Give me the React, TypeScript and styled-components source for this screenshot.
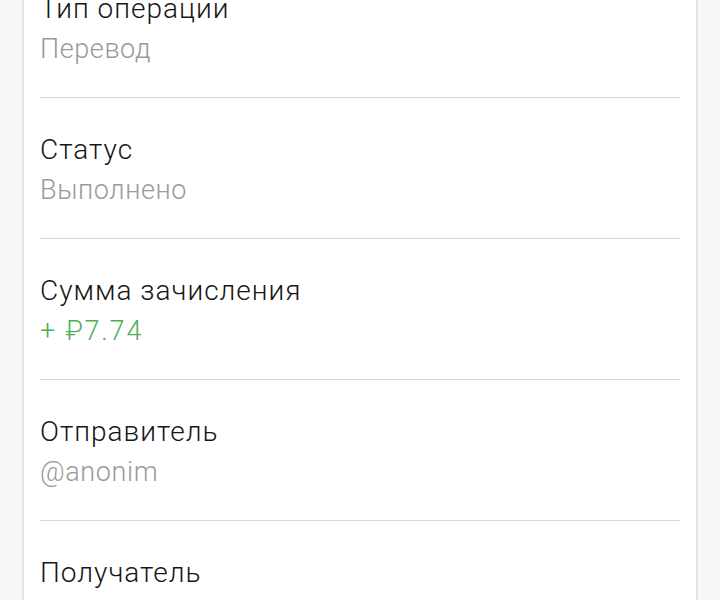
import React from "react";
import styled, { createGlobalStyle } from "styled-components";

const GlobalStyle = createGlobalStyle`
    html, body {
        margin: 0;
        padding: 0;
        background-color: #f7f7f7;
        font-family: Roboto, "Noto Sans", sans-serif;
    }
`;

const Page = styled.div`
    height: 600px;
    overflow: hidden;
`;

const DetailsCard = styled.div`
    margin: -43px 24px 0 24px;
    padding: 0 16px;
    background-color: #ffffff;
    box-shadow: -1px 0 2px rgba(0, 0, 0, 0.14), 1px 0 2px rgba(0, 0, 0, 0.14);
`;

const DetailRow = styled.div`
    padding: 32px 0 28px 0;
    border-bottom: 1px solid #d6d6d6;
`;

const DetailLabel = styled.div`
    font-size: 28px;
    font-weight: 300;
    line-height: 40px;
    letter-spacing: 1px;
    color: #161616;
`;

const DetailValue = styled.div<{ $accent?: boolean }>`
    font-size: 27px;
    font-weight: 300;
    line-height: 40px;
    letter-spacing: ${(props) => (props.$accent ? "1.8px" : "0.6px")};
    color: ${(props) => (props.$accent ? "#4caf50" : "#9a9a9a")};
`;

const details = [
    { label: "Тип операции", value: "Перевод" },
    { label: "Статус", value: "Выполнено" },
    { label: "Сумма зачисления", value: "+ ₽7.74", accent: true },
    { label: "Отправитель", value: "@anonim" },
    { label: "Получатель", value: "@user" }
];

export default function App() {
    return (
        <Page>
            <GlobalStyle />
            <DetailsCard>
                {
                    details.map((item, index) => {
                        return (
                            <DetailRow key={index}>
                                <DetailLabel>{item.label}</DetailLabel>
                                <DetailValue $accent={item.accent}>{item.value}</DetailValue>
                            </DetailRow>
                        );
                    })
                }
            </DetailsCard>
        </Page>
    );
};
